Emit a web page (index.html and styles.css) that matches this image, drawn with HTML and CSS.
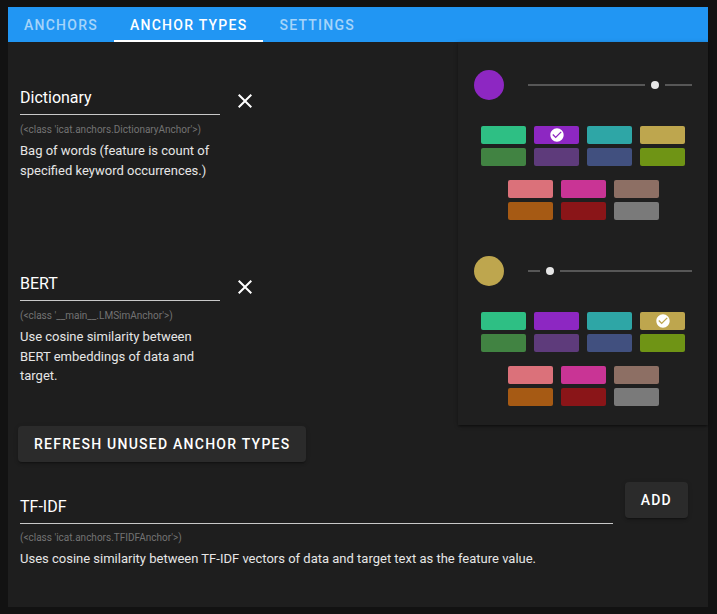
FILE: index.html
```html
<!DOCTYPE html>
<html>
<head>
<meta charset="utf-8">
<link rel="stylesheet" href="styles.css">
</head>
<body>
<div class="app">
  <div class="tabs">
    <div class="tab">ANCHORS</div>
    <div class="tab active">ANCHOR TYPES</div>
    <div class="tab">SETTINGS</div>
  </div>
  <div class="main">
    <div class="list">
      <div class="item">
        <div class="field-row">
          <div class="field"><div class="field-text">Dictionary</div></div>
          <svg class="close" viewBox="0 0 24 24"><path d="M19,6.41L17.59,5L12,10.59L6.41,5L5,6.41L10.59,12L5,17.59L6.41,19L12,13.41L17.59,19L19,17.59L13.41,12L19,6.41Z"/></svg>
        </div>
        <div class="cls">(&lt;class 'icat.anchors.DictionaryAnchor'&gt;)</div>
        <div class="desc">Bag of words (feature is count of specified keyword occurrences.)</div>
      </div>
      <div class="item">
        <div class="field-row">
          <div class="field"><div class="field-text">BERT</div></div>
          <svg class="close" viewBox="0 0 24 24"><path d="M19,6.41L17.59,5L12,10.59L6.41,5L5,6.41L10.59,12L5,17.59L6.41,19L12,13.41L17.59,19L19,17.59L13.41,12L19,6.41Z"/></svg>
        </div>
        <div class="cls">(&lt;class '__main__.LMSimAnchor'&gt;)</div>
        <div class="desc">Use cosine similarity between BERT embeddings of data and target.</div>
      </div>
    </div>
    <div class="card">
      <div class="picker">
        <div class="head">
          <div class="dot c-purple"></div>
          <div class="slider">
            <div class="track" style="width:117px"></div>
            <div class="thumb"></div>
            <div class="track grow"></div>
          </div>
        </div>
        <div class="grid4">
          <div class="sw c-green"></div>
          <div class="sw c-purple"><svg class="chk" viewBox="0 0 24 24"><path d="M12 2C6.5 2 2 6.5 2 12S6.5 22 12 22 22 17.5 22 12 17.5 2 12 2M10 17L5 12L6.41 10.59L10 14.17L17.59 6.58L19 8L10 17Z"/></svg></div>
          <div class="sw c-teal"></div>
          <div class="sw c-gold"></div>
          <div class="sw c-dgreen"></div>
          <div class="sw c-dpurple"></div>
          <div class="sw c-navy"></div>
          <div class="sw c-olive"></div>
        </div>
        <div class="grid3">
          <div class="sw c-pink"></div>
          <div class="sw c-magenta"></div>
          <div class="sw c-brown"></div>
          <div class="sw c-orange"></div>
          <div class="sw c-red"></div>
          <div class="sw c-gray"></div>
        </div>
      </div>
      <div class="picker">
        <div class="head">
          <div class="dot c-gold"></div>
          <div class="slider">
            <div class="track" style="width:12px"></div>
            <div class="thumb"></div>
            <div class="track grow"></div>
          </div>
        </div>
        <div class="grid4">
          <div class="sw c-green"></div>
          <div class="sw c-purple"></div>
          <div class="sw c-teal"></div>
          <div class="sw c-gold"><svg class="chk" viewBox="0 0 24 24"><path d="M12 2C6.5 2 2 6.5 2 12S6.5 22 12 22 22 17.5 22 12 17.5 2 12 2M10 17L5 12L6.41 10.59L10 14.17L17.59 6.58L19 8L10 17Z"/></svg></div>
          <div class="sw c-dgreen"></div>
          <div class="sw c-dpurple"></div>
          <div class="sw c-navy"></div>
          <div class="sw c-olive"></div>
        </div>
        <div class="grid3">
          <div class="sw c-pink"></div>
          <div class="sw c-magenta"></div>
          <div class="sw c-brown"></div>
          <div class="sw c-orange"></div>
          <div class="sw c-red"></div>
          <div class="sw c-gray"></div>
        </div>
      </div>
    </div>
  </div>
  <div class="refresh-row">
    <button class="btn">REFRESH UNUSED ANCHOR TYPES</button>
  </div>
  <div class="new-row">
    <div class="new-field">
      <div class="field wide"><div class="field-text">TF-IDF</div></div>
      <div class="cls cls-new">(&lt;class 'icat.anchors.TFIDFAnchor'&gt;)</div>
      <div class="desc">Uses cosine similarity between TF-IDF vectors of data and target text as the feature value.</div>
    </div>
    <button class="btn">ADD</button>
  </div>
</div>
</body>
</html>
```
FILE: styles.css
```css
* { box-sizing: border-box; }
html, body { margin: 0; padding: 0; }
body {
  background: #121212;
  font-family: Roboto, "Liberation Sans", sans-serif;
  color: #fff;
}
.app {
  margin: 7px 0 0 8px;
  width: 700px;
  height: 600px;
  background: #1e1e1e;
}
.tabs {
  height: 35px;
  background: #2196f3;
  display: flex;
}
.tab {
  padding: 0 16px;
  font-size: 14px;
  font-weight: 500;
  letter-spacing: 1.25px;
  color: rgba(255,255,255,0.6);
  display: flex;
  align-items: center;
  border-bottom: 2px solid transparent;
  padding-top: 2px;
}
.tab.active {
  color: #fff;
  border-bottom-color: #fff;
}
.main {
  display: flex;
  justify-content: space-between;
  align-items: flex-start;
}
.list {
  padding: 44px 0 0 12px;
}
.item {
  width: 240px;
  height: 186px;
}
.item:last-child { height: auto; }
.field-row {
  display: flex;
  align-items: center;
}
.field {
  width: 200px;
  border-bottom: 1px solid #c8c8c8;
  padding-bottom: 4px;
}
.field-text {
  font-size: 16px;
  line-height: 24px;
  color: #fff;
}
.close {
  width: 24px;
  height: 24px;
  margin-left: 13px;
  margin-top: 1px;
  fill: #fff;
}
.cls {
  margin-top: 8px;
  font-size: 10px;
  line-height: 14px;
  color: #737373;
}
.cls-new { margin-top: 7px; }
.desc {
  margin-top: 4px;
  width: 200px;
  font-size: 13px;
  line-height: 19.5px;
  color: #e6e6e6;
}
.new-field .desc { width: auto; }
.card {
  width: 250px;
  height: 383px;
  background: #1f1f1f;
  box-shadow: 0 2px 2px -1px rgba(0,0,0,0.4), 0 1px 4px rgba(0,0,0,0.3);
  padding: 28px 16px 0 16px;
}
.picker { height: 186px; }
.head {
  display: flex;
  align-items: center;
  gap: 24px;
}
.dot {
  width: 30px;
  height: 30px;
  border-radius: 50%;
}
.slider {
  flex: 1;
  display: flex;
  align-items: center;
  gap: 6px;
}
.track {
  height: 2px;
  background: #575757;
}
.track.grow { flex: 1; }
.thumb {
  width: 8px;
  height: 8px;
  border-radius: 50%;
  background: #e6e6e6;
}
.grid4, .grid3 {
  display: grid;
  gap: 4px 8px;
  justify-content: center;
}
.grid4 {
  grid-template-columns: repeat(4, 45px);
  margin-top: 26px;
}
.grid3 {
  grid-template-columns: repeat(3, 45px);
  margin-top: 14px;
}
.sw {
  height: 18px;
  border-radius: 2px;
  display: flex;
  align-items: center;
  justify-content: center;
}
.chk { width: 16px; height: 16px; fill: #fff; }
.c-green { background: #2ebf84; }
.c-purple { background: #8d27c2; }
.c-teal { background: #2ea6a6; }
.c-gold { background: #bea64e; }
.c-dgreen { background: #418342; }
.c-dpurple { background: #5e3b7b; }
.c-navy { background: #41507f; }
.c-olive { background: #6f9415; }
.c-pink { background: #db717a; }
.c-magenta { background: #c93495; }
.c-brown { background: #8d6f64; }
.c-orange { background: #a65a14; }
.c-red { background: #8a1518; }
.c-gray { background: #7a7a7a; }
.refresh-row {
  padding: 1px 0 0 10px;
}
.btn {
  height: 36px;
  padding: 0 16px;
  border: none;
  border-radius: 4px;
  background: #2b2b2b;
  color: #fff;
  font-family: Roboto, "Liberation Sans", sans-serif;
  font-size: 14px;
  font-weight: 500;
  letter-spacing: 1.25px;
  box-shadow: 0 3px 1px -2px rgba(0,0,0,0.2), 0 2px 2px rgba(0,0,0,0.14), 0 1px 5px rgba(0,0,0,0.12);
}
.new-row {
  display: flex;
  align-items: flex-start;
  gap: 12px;
  margin-top: 20px;
  padding: 0 20px 0 12px;
}
.new-field {
  flex: 1;
  padding-top: 13px;
}
.field.wide { width: auto; }
```
